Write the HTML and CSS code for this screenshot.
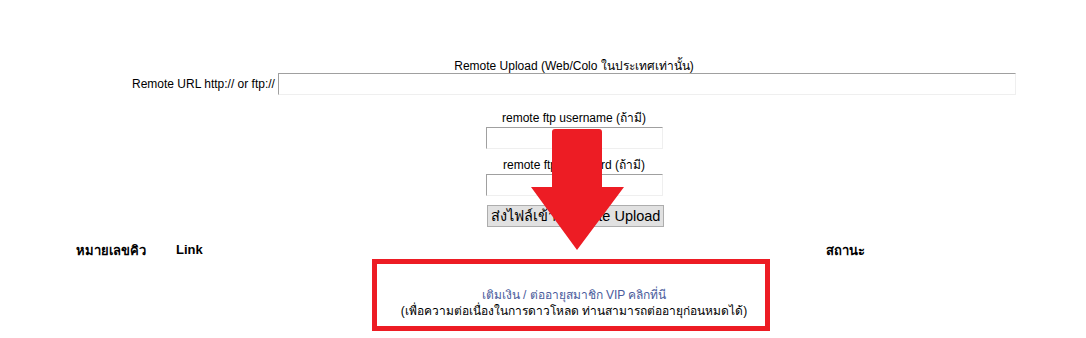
FILE: index.html
```html
<!DOCTYPE html>
<html>
<head>
<meta charset="utf-8">
<link rel="stylesheet" href="styles.css">
</head>
<body>
<div class="page">
  <div class="upload">
    <div class="title">Remote Upload (Web/Colo ในประเทศเท่านั้น)</div>
    <div class="url-row">
      <span class="url-label">Remote URL http:// or ftp://</span>
      <input class="field url-field" type="text">
    </div>
    <div class="label first">remote ftp username (ถ้ามี)</div>
    <input class="field small-field" type="text">
    <div class="label">remote ftp password (ถ้ามี)</div>
    <input class="field small-field" type="password">
    <button class="send">ส่งไฟล์เข้า Remote Upload</button>
  </div>
  <div class="queue-head">
    <span class="col-num">หมายเลขคิว</span>
    <span class="col-link">Link</span>
    <span class="col-status">สถานะ</span>
  </div>
  <div class="vip">
    <a class="vip-link" href="#">เติมเงิน / ต่ออายุสมาชิก VIP คลิกที่นี</a>
    <div class="vip-note">(เพื่อความต่อเนื่องในการดาวโหลด ท่านสามารถต่ออายุก่อนหมดได้)</div>
  </div>
  <div class="mark-box"></div>
  <svg class="mark-arrow" width="93" height="122" viewBox="0 0 93 122">
    <path d="M24 1 H68 Q71 1 71 4 V59 H93 L46 122 L0 59 H21 V4 Q21 1 24 1 Z" fill="#ed1c24"/>
  </svg>
</div>
</body>
</html>
```
FILE: styles.css
```css
html, body {
  margin: 0;
  padding: 0;
  background: #ffffff;
}
body {
  font-family: "Liberation Sans", Arial, sans-serif;
  font-size: 12px;
  color: #000000;
}
.page {
  position: relative;
  width: 1086px;
  height: 338px;
  overflow: hidden;
}
.upload {
  margin: 59px 0 0 132px;
  width: 884px;
  display: flex;
  flex-direction: column;
  align-items: center;
}
.title {
  line-height: 14px;
  height: 14px;
}
.url-row {
  display: flex;
  align-items: center;
  width: 100%;
  height: 22px;
}
.url-label {
  margin-right: 3px;
  white-space: nowrap;
  line-height: 14px;
}
.field {
  box-sizing: border-box;
  height: 22px;
  border: 1px solid;
  border-color: #a0a0a0 #efefef #efefef #a0a0a0;
  background: #ffffff;
  margin: 0;
  padding: 0 3px;
  font: inherit;
  outline: none;
}
.url-field {
  flex: 1;
}
.label {
  margin-top: 9px;
  line-height: 14px;
  height: 14px;
  margin-bottom: 2px;
}
.label.first {
  margin-top: 16px;
}
.small-field {
  width: 177px;
  margin-left: 1px;
}
.send {
  box-sizing: border-box;
  margin-top: 9px;
  margin-left: 3px;
  width: 177px;
  height: 22px;
  padding: 0;
  background: #e1e1e1;
  border: 1px solid #adadad;
  font-family: "Liberation Sans", Arial, sans-serif;
  font-size: 14.5px;
  line-height: 18px;
  color: #000000;
  white-space: nowrap;
}
.queue-head {
  display: grid;
  grid-template-columns: 100px 650px auto;
  margin: 16px 0 0 76px;
  font-weight: bold;
  font-size: 13px;
  line-height: 16px;
  height: 16px;
}
.col-link {
  margin-top: -1px;
}
.vip {
  margin: 28px 0 0 132px;
  width: 884px;
  text-align: center;
  line-height: 16px;
}
.vip-link {
  color: #4a5b9c;
  text-decoration: none;
}
.mark-box {
  position: absolute;
  left: 372px;
  top: 259px;
  width: 388px;
  height: 62px;
  border: 5px solid #ed1c24;
}
.mark-arrow {
  position: absolute;
  left: 531px;
  top: 128px;
  display: block;
}
```
